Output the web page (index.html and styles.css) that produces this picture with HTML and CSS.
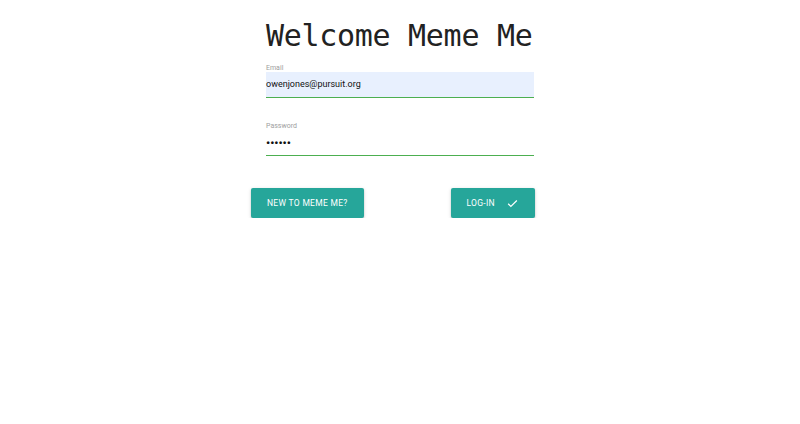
FILE: index.html
```html
<!DOCTYPE html>
<html>
<head>
<meta charset="utf-8">
<link rel="stylesheet" href="styles.css">
</head>
<body>
<div class="login">
  <h1 class="title">Welcome Meme Me</h1>
  <div class="field">
    <label class="label">Email</label>
    <div class="input autofill">owenjones@pursuit.org</div>
  </div>
  <div class="field">
    <label class="label">Password</label>
    <div class="input dots">••••••</div>
  </div>
  <div class="actions">
    <button class="btn">NEW TO MEME ME?</button>
    <button class="btn">LOG-IN
      <svg class="check" viewBox="0 0 24 24" width="13" height="13"><path d="M4 12.5l5 5L20 6.5" fill="none" stroke="#fff" stroke-width="2.2"/></svg>
    </button>
  </div>
</div>
</body>
</html>
```

FILE: styles.css
```css
html, body { margin: 0; padding: 0; background: #fff; }
body { font-family: Roboto, "Liberation Sans", sans-serif; }
.login {
  width: 268px;
  margin: 0 auto;
  padding-top: 16px;
}
.title {
  margin: 0;
  font-family: "DejaVu Sans Mono", monospace;
  font-weight: normal;
  font-size: 30px;
  line-height: 40px;
  color: #222;
  letter-spacing: -0.3px;
}
.field {
  display: flex;
  flex-direction: column;
  margin-top: 8px;
}
.field + .field { margin-top: 24px; }
.label {
  font-size: 7px;
  line-height: 8px;
  color: #9e9e9e;
}
.input {
  height: 25px;
  line-height: 25px;
  font-size: 9px;
  color: #111;
  border-bottom: 1px solid #4caf50;
}
.autofill { background: #e8f0fe; }
.dots { font-size: 11.5px; line-height: 27px; font-weight: 700; }
.actions {
  display: flex;
  justify-content: space-between;
  margin: 32px -1px 0 -15px;
}
.btn {
  display: flex;
  align-items: center;
  gap: 11px;
  height: 30px;
  padding: 0 16px;
  border: none;
  border-radius: 2px;
  background: #26a69a;
  color: #fff;
  font-family: Roboto, "Liberation Sans", sans-serif;
  font-size: 8.5px;
  letter-spacing: 0.3px;
  box-shadow: 0 1px 2px rgba(0,0,0,0.2), 0 1px 4px rgba(0,0,0,0.1);
}
.check { display: block; }
```
